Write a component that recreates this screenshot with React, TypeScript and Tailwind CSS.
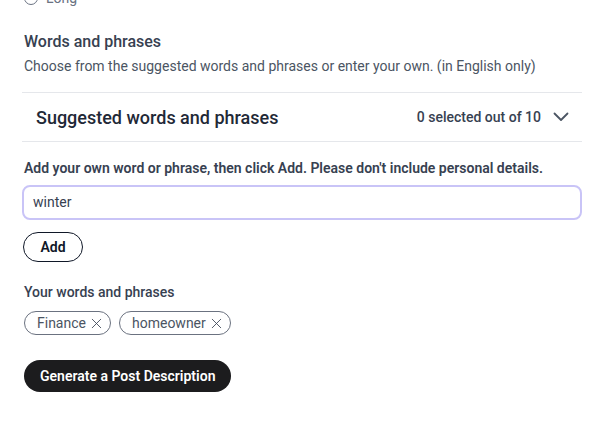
import { X } from 'lucide-react'

const chips = ['Finance', 'homeowner']

export default function App() {
  return (
    <div className="min-h-[428px] bg-white font-['Roboto',sans-serif] text-gray-800">
      <div className="pl-[22px] pr-[10px]">
        {/* tail of the length option above, cut off by the viewport */}
        <div className="flex items-center gap-2 -mt-[9px] pl-[2px] h-[14px]">
          <span className="inline-block w-[14px] h-[14px] rounded-full border border-gray-500"></span>
          <span className="text-sm text-gray-500">Long</span>
        </div>

        <div className="pt-[27px] pl-[2px]">
          <h3 className="text-[16px] leading-5 font-medium text-[#374151]">Words and phrases</h3>
          <p className="mt-[4px] text-[14px] leading-5 text-[#4b5563]">
            Choose from the suggested words and phrases or enter your own. (in English only)
          </p>
        </div>

        <div className="mt-[16px] border-y border-[#e5e7eb] h-[50px] flex items-center justify-between pl-[14px] pr-[13px]">
          <span className="text-[18px] font-medium text-[#1f2937]">Suggested words and phrases</span>
          <div className="flex items-center gap-[12px]">
            <span className="text-[14px] font-medium text-[#374151]">0 selected out of 10</span>
            <svg width="16" height="10" viewBox="0 0 16 10" fill="none" className="text-[#4b5563]">
              <polyline points="1.5,1.5 8,8 14.5,1.5" stroke="currentColor" strokeWidth="1.8" strokeLinecap="round" strokeLinejoin="round" />
            </svg>
          </div>
        </div>

        <div className="mt-[16px] pl-[2px] text-[14px] leading-5 font-semibold text-[#374151]">
          Add your own word or phrase, then click Add. Please don't include personal details.
        </div>

        <div className="mt-[7px] h-[35px] rounded-lg border-2 border-[#c9c4f7] flex items-center px-[9px]">
          <span className="text-[14px] text-[#374151]">winter</span>
        </div>

        <button className="mt-[12px] ml-[1px] h-[30px] w-[60px] rounded-full border border-gray-900 text-[14px] font-semibold text-gray-900">
          Add
        </button>

        <div className="mt-[20px] pl-[2px] text-[14px] leading-5 font-medium text-[#374151]">Your words and phrases</div>

        <div className="mt-[9px] pl-[2px] flex gap-[8px]">
          {chips.map((c) => (
            <span
              key={c}
              className="h-[24px] flex items-center gap-[2px] pl-[12px] pr-[5px] rounded-full border border-[#6b7280] text-[14px] text-[#4b5563]"
            >
              {c}
              <X className="w-[17px] h-[17px] text-[#374151]" strokeWidth={1.2} />
            </span>
          ))}
        </div>

        <button className="mt-[25px] ml-[2px] h-[32px] px-[16px] rounded-full bg-[#1c1c1e] text-white text-[14px] font-semibold">
          Generate a Post Description
        </button>
      </div>
    </div>
  )
}
